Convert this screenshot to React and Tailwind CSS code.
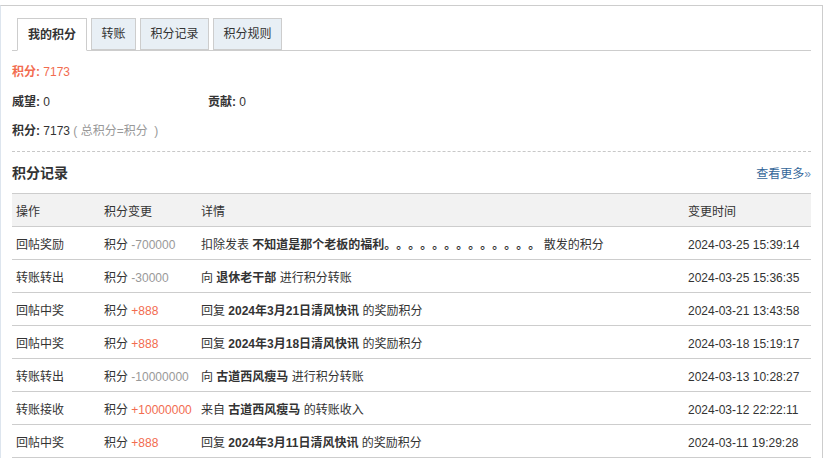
import React from "react";

const rows = [
  { op: "回帖奖励", val: "-700000", pos: false, detail: <>扣除发表 <b className="font-bold">不知道是那个老板的福利。。。。。。。。。。。。。</b> 散发的积分</>, time: "2024-03-25 15:39:14" },
  { op: "转账转出", val: "-30000", pos: false, detail: <>向 <b className="font-bold">退休老干部</b> 进行积分转账</>, time: "2024-03-25 15:36:35" },
  { op: "回帖中奖", val: "+888", pos: true, detail: <>回复 <b className="font-bold">2024年3月21日清风快讯</b> 的奖励积分</>, time: "2024-03-21 13:43:58" },
  { op: "回帖中奖", val: "+888", pos: true, detail: <>回复 <b className="font-bold">2024年3月18日清风快讯</b> 的奖励积分</>, time: "2024-03-18 15:19:17" },
  { op: "转账转出", val: "-10000000", pos: false, detail: <>向 <b className="font-bold">古道西风瘦马</b> 进行积分转账</>, time: "2024-03-13 10:28:27" },
  { op: "转账接收", val: "+10000000", pos: true, detail: <>来自 <b className="font-bold">古道西风瘦马</b> 的转账收入</>, time: "2024-03-12 22:22:11" },
  { op: "回帖中奖", val: "+888", pos: true, detail: <>回复 <b className="font-bold">2024年3月11日清风快讯</b> 的奖励积分</>, time: "2024-03-11 19:29:28" },
];

export default function App() {
  return (
    <div
      className="w-[829px] h-[458px] overflow-hidden bg-white text-[12px] text-[#333] [text-spacing-trim:space-all]"
      style={{ fontFamily: '"Liberation Sans", "Noto Sans CJK SC", sans-serif' }}
    >
      <div className="mt-[5px] w-[823px] h-[460px] border border-b-0 border-[#cdcdcd] border-l-[#dde5ee] px-[11px] pt-[12px]">
        {/* tabs */}
        <div className="flex gap-[4px] pl-[5px] border-b border-[#cdcdcd] h-[33px]">
          <div className="h-[33px] px-[10px] flex items-center bg-white border border-[#cdcdcd] border-b-white font-bold text-[#333]">我的积分</div>
          <div className="h-[32px] px-[9.5px] flex items-center bg-[#e8eff5] border border-[#cdcdcd]">转账</div>
          <div className="h-[32px] px-[9.5px] flex items-center bg-[#e8eff5] border border-[#cdcdcd]">积分记录</div>
          <div className="h-[32px] px-[9.5px] flex items-center bg-[#e8eff5] border border-[#cdcdcd]">积分规则</div>
        </div>

        <div className="mt-[6px]">
          <div className="h-[29px] flex items-center text-[#f26c4f]">
            <span className="font-bold">积分:</span>&nbsp;7173
          </div>
          <div className="h-[29px] pt-[2px] flex items-center">
            <div className="w-[196px]"><span className="font-bold">威望:</span> 0</div>
            <div><span className="font-bold">贡献:</span> 0</div>
          </div>
          <div className="h-[29px] pt-[2px] flex items-center">
            <span className="font-bold">积分:</span>&nbsp;7173
            <span className="text-[#999]">&nbsp;(&nbsp;总积分=积分&nbsp;&nbsp;)</span>
          </div>
        </div>

        <div className="mt-[7px] border-t border-dashed border-[#c8c8c8]"></div>

        <div className="h-[41px] pt-[2px] flex items-center justify-between">
          <div className="text-[14px] font-bold text-[#333]">积分记录</div>
          <div className="text-[#336699]">查看更多<span className="text-[#6c8fb8]">»</span></div>
        </div>

        <div className="border-t border-[#cdcdcd]">
          <div className="flex h-[33px] pt-[3px] items-center bg-[#f2f2f2] border-b border-[#cdcdcd]">
            <div className="w-[88px] pl-[4px]">操作</div>
            <div className="w-[97px] pl-[4px]">积分变更</div>
            <div className="w-[487px] pl-[4px]">详情</div>
            <div className="flex-1 pl-[4px]">变更时间</div>
          </div>
          {rows.map((r, i) => (
            <div key={i} className="flex h-[33px] pt-[3px] items-center border-b border-[#cdcdcd]">
              <div className="w-[88px] pl-[4px]">{r.op}</div>
              <div className="w-[97px] pl-[4px] whitespace-nowrap">
                积分 <span className={r.pos ? "text-[#f26c4f]" : "text-[#999]"}>{r.val}</span>
              </div>
              <div className="w-[487px] pl-[4px] whitespace-nowrap">{r.detail}</div>
              <div className="flex-1 pl-[4px] whitespace-nowrap">{r.time}</div>
            </div>
          ))}
        </div>
      </div>
    </div>
  );
}
